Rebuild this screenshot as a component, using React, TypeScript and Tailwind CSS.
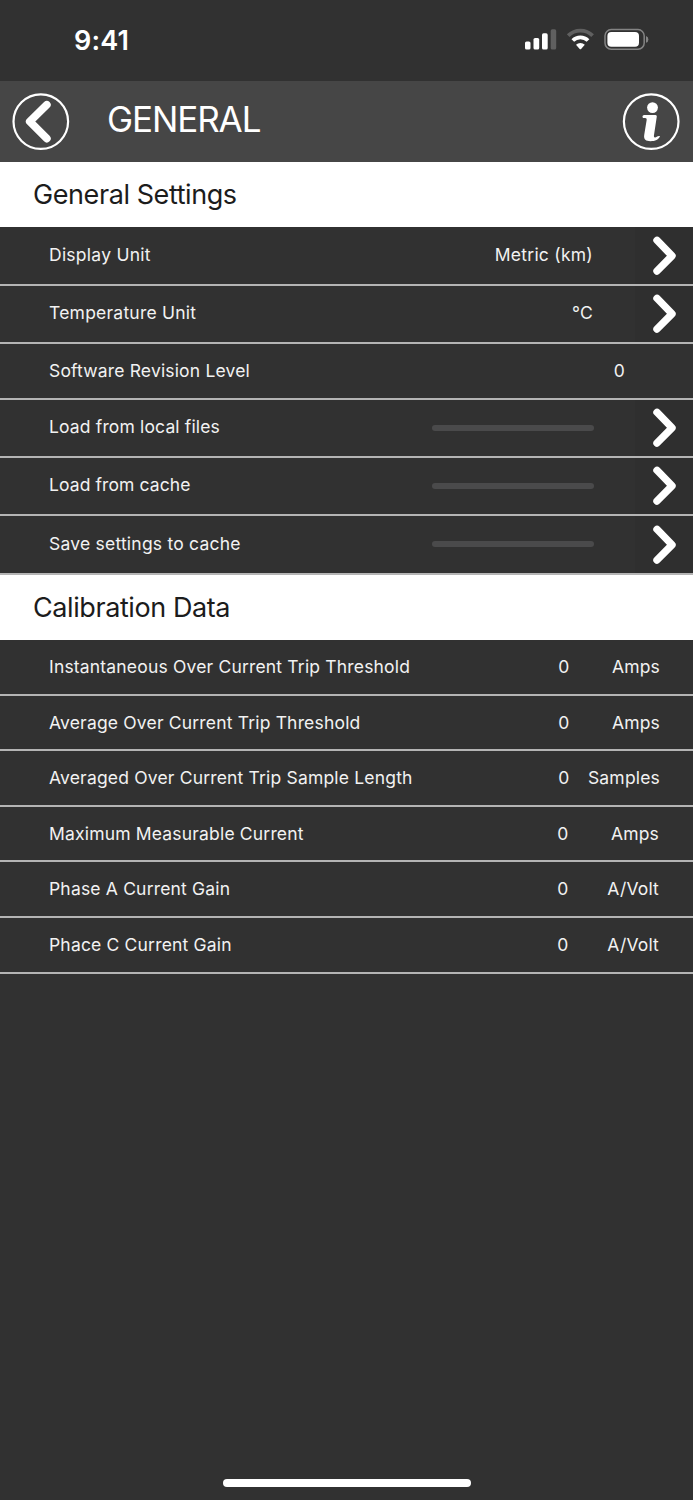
import type { ReactNode } from "react";

const settings = [
  { label: "Display Unit", value: "Metric (km)", height: "h-[59px]", track: "tracking-[0.25px]" },
  { label: "Temperature Unit", value: "°C", height: "h-[58px]", track: "tracking-[0.23px]" },
  { label: "Software Revision Level", value: "0", height: "h-[56px]", track: "tracking-[0.17px]", plain: true },
  { label: "Load from local files", height: "h-[58px]", track: "tracking-[0.15px]" },
  { label: "Load from cache", height: "h-[58px]", track: "tracking-[0.1px]" },
  { label: "Save settings to cache", height: "h-[59px]", track: "tracking-[0.22px]" },
];

const calibration = [
  { label: "Instantaneous Over Current Trip Threshold", unit: "Amps", height: "h-[56px]", pad: "pr-[33px]" },
  { label: "Average Over Current Trip Threshold", unit: "Amps", height: "h-[55px] pt-px", pad: "pr-[33px]" },
  { label: "Averaged Over Current Trip Sample Length", unit: "Samples", height: "h-[56px]", pad: "pr-[33px]" },
  { label: "Maximum Measurable Current", unit: "Amps", height: "h-[55px] pt-px", pad: "pr-[34px]" },
  { label: "Phase A Current Gain", unit: "A/Volt", height: "h-[56px]", pad: "pr-[34px]" },
  { label: "Phace C Current Gain", unit: "A/Volt", height: "h-[56px]", pad: "pr-[34px]" },
];

function StatusBar() {
  return (
    <div className="flex h-[81px] items-start justify-between pl-[74px] pr-[44px]">
      <span className="mt-[24px] text-[27px] leading-[34px] font-semibold tracking-[0.2px]">9:41</span>
      <svg className="mt-[28px]" width="124" height="24" viewBox="525 28 124 24" fill="white">
        <rect x="525" y="41.5" width="5.5" height="8" rx="1.6" />
        <rect x="533.5" y="38" width="5.7" height="11.5" rx="1.6" />
        <rect x="542" y="33.3" width="5.7" height="16.2" rx="1.6" />
        <rect x="550.7" y="29.3" width="5.5" height="20.2" rx="1.6" fill="#606060" />
        <g fill="none" strokeWidth="3.8">
          <path d="M568.2 35.7a17.3 17.3 0 0 1 24.4 0" stroke="#606060" />
          <path d="M572.8 40.5a10.8 10.8 0 0 1 15.2 0" stroke="white" />
        </g>
        <path d="M576 44.8a6.2 6.2 0 0 1 8.8 0l-3.7 4.1q-.7.7-1.4 0Z" />
        <rect x="605" y="29.6" width="39.2" height="19.6" rx="6.2" fill="none" stroke="#848484" strokeWidth="1.5" />
        <rect x="607.4" y="32" width="31.6" height="14.8" rx="4" />
        <path d="M646 36v6.8q2.4-.9 2.4-3.4T646 36Z" fill="#848484" />
      </svg>
    </div>
  );
}

function NavBar() {
  return (
    <header className="flex h-[81px] items-center bg-[#464646] pl-[12px] pr-[13px]">
      <svg width="58" height="58" viewBox="12 93 58 58" fill="none" stroke="white">
        <circle cx="40.8" cy="121.6" r="27.3" strokeWidth="2.2" />
        <path d="M46.8 104.8 29.8 121.6 46.8 138.6" strokeWidth="7.8" strokeLinecap="round" strokeLinejoin="round" />
      </svg>
      <h1 className="mb-[6px] ml-[37px] flex-1 text-[35px] leading-[44px] tracking-[-1.1px]">GENERAL</h1>
      <svg width="58" height="58" viewBox="622 93 58 58" fill="white">
        <circle cx="651.2" cy="121.6" r="27.3" fill="none" stroke="white" strokeWidth="2.2" />
        <circle cx="652.5" cy="107.6" r="5.4" />
        <path d="M644 115h11.5q1.5 0 1.3 1.6l-2.9 19.2q-.2 1.8 1.2 1.6c1.5-.2 2-1.8 4.9-1.4-1 3.6-5 5.2-9.5 5.2-4.6 0-7-1.8-6.3-6.2l2.5-15.2q.3-1.8-1.5-1.8H643q-1.4-2.4 1-3Z" />
      </svg>
    </header>
  );
}

function SectionTitle({ children }: { children: ReactNode }) {
  return (
    <h2 className="flex h-[65px] items-center bg-white pl-[33px] pt-[2px] text-[27px] tracking-[-0.42px] text-[#1c1c1c]">
      {children}
    </h2>
  );
}

function Chevron() {
  return (
    <div className="ml-[42px] flex h-full w-[58px] items-center justify-end bg-[#2f2f2f] pr-[14px]">
      <svg width="28" height="42" viewBox="0 0 28 42" fill="none" stroke="white" strokeWidth="7.4" strokeLinecap="round" strokeLinejoin="round">
        <path d="M6 5.3 21 20.8 6 36" />
      </svg>
    </div>
  );
}

export default function App() {
  return (
    <main className="flex h-[1500px] w-[693px] flex-col overflow-hidden bg-[#313131] font-['Inter',sans-serif] text-white">
      <StatusBar />
      <NavBar />
      <SectionTitle>General Settings</SectionTitle>
      <ul>
        {settings.map((row) => (
          <li
            key={row.label}
            className={`flex items-center border-b-2 border-[#b4b4b4] pl-[49px] text-[17.5px] text-[#f2f2f2] ${row.height} ${row.track}`}
          >
            <span className={row.plain ? "flex-1" : "mb-px flex-1"}>{row.label}</span>
            {row.value ? (
              <span className={row.plain ? "mr-[68px]" : "mb-px"}>{row.value}</span>
            ) : (
              <span className="-mr-px mb-px h-[6px] w-[162px] rounded-full bg-[#4a4a4b]" />
            )}
            {!row.plain && <Chevron />}
          </li>
        ))}
      </ul>
      <SectionTitle>Calibration Data</SectionTitle>
      <ul>
        {calibration.map((row) => (
          <li
            key={row.label}
            className={`flex items-center border-b-2 border-[#b4b4b4] pl-[49px] text-[17.5px] tracking-[0.18px] text-[#f2f2f2] ${row.height} ${row.pad}`}
          >
            <span className="flex-1">{row.label}</span>
            <span>0</span>
            <span className="w-[90.5px] text-right">{row.unit}</span>
          </li>
        ))}
      </ul>
      <div className="mx-auto mt-auto mb-[13px] h-[8px] w-[248px] rounded-full bg-white" />
    </main>
  );
}
